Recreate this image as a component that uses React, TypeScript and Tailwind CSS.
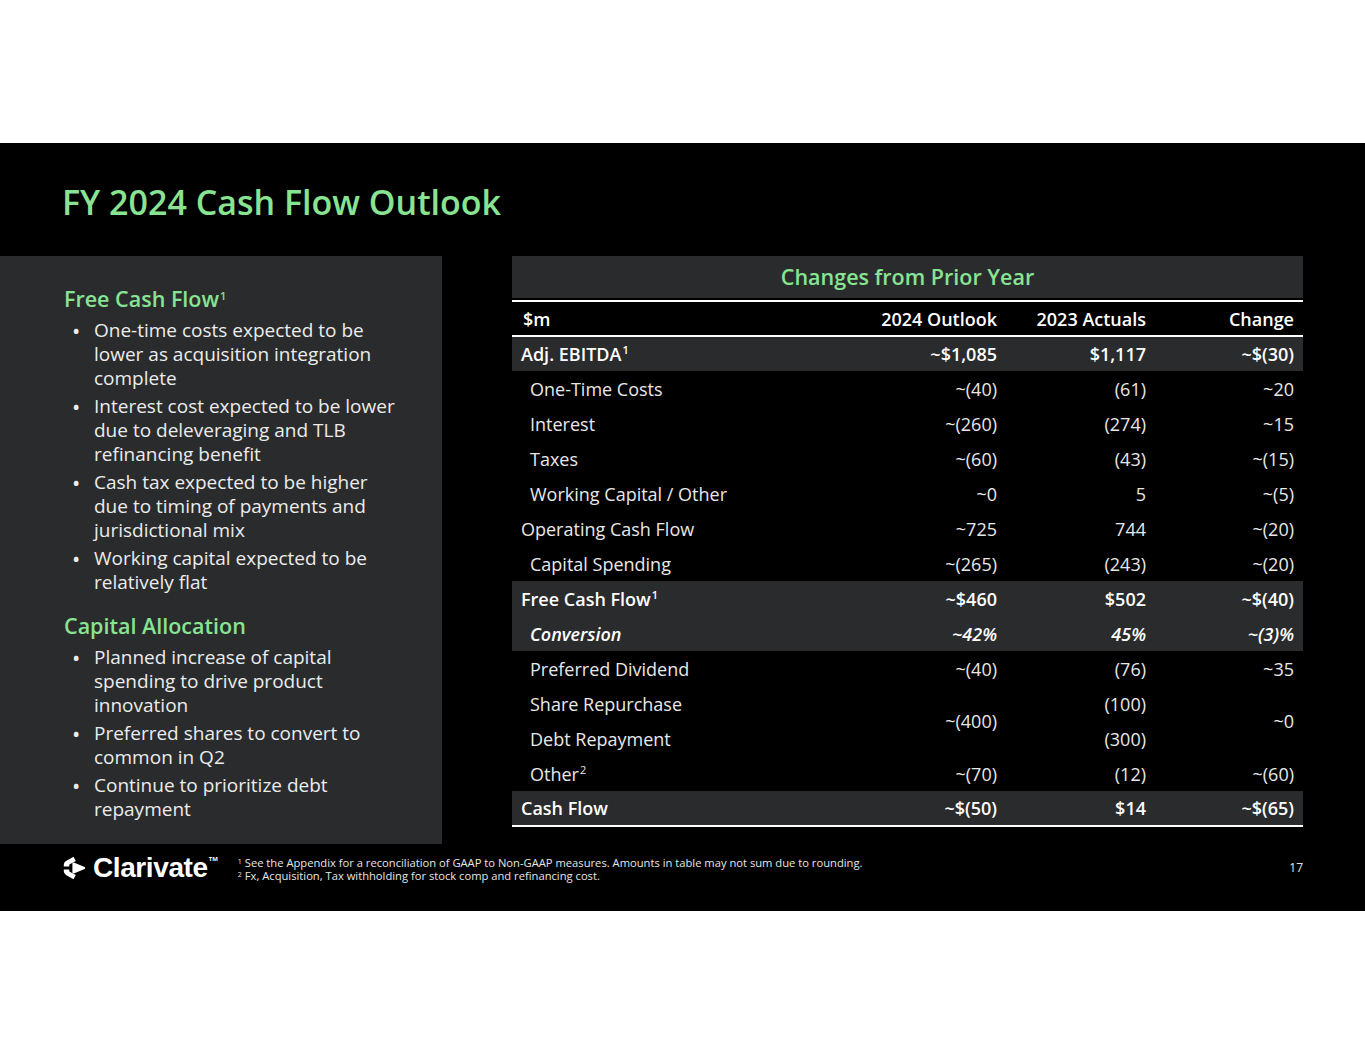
import React from 'react'

type Row = {
  label: React.ReactNode
  outlook?: string
  actuals: string
  change?: string
  kind: 'total' | 'plain' | 'italic'
  indent?: boolean
  span?: boolean
  skip?: boolean
}

function Sup({ n }: { n: string }) {
  return <span className="relative -top-[7px] ml-[1px] text-[11px] leading-none">{n}</span>
}

const rows: Row[] = [
  { label: <>Adj. EBITDA<Sup n="1" /></>, outlook: '~$1,085', actuals: '$1,117', change: '~$(30)', kind: 'total' },
  { label: 'One-Time Costs', outlook: '~(40)', actuals: '(61)', change: '~20', kind: 'plain', indent: true },
  { label: 'Interest', outlook: '~(260)', actuals: '(274)', change: '~15', kind: 'plain', indent: true },
  { label: 'Taxes', outlook: '~(60)', actuals: '(43)', change: '~(15)', kind: 'plain', indent: true },
  { label: 'Working Capital / Other', outlook: '~0', actuals: '5', change: '~(5)', kind: 'plain', indent: true },
  { label: 'Operating Cash Flow', outlook: '~725', actuals: '744', change: '~(20)', kind: 'plain' },
  { label: 'Capital Spending', outlook: '~(265)', actuals: '(243)', change: '~(20)', kind: 'plain', indent: true },
  { label: <>Free Cash Flow<Sup n="1" /></>, outlook: '~$460', actuals: '$502', change: '~$(40)', kind: 'total' },
  { label: 'Conversion', outlook: '~42%', actuals: '45%', change: '~(3)%', kind: 'italic', indent: true },
  { label: 'Preferred Dividend', outlook: '~(40)', actuals: '(76)', change: '~35', kind: 'plain', indent: true },
  { label: 'Share Repurchase', outlook: '~(400)', actuals: '(100)', change: '~0', kind: 'plain', indent: true, span: true },
  { label: 'Debt Repayment', actuals: '(300)', kind: 'plain', indent: true, skip: true },
  { label: <>Other<Sup n="2" /></>, outlook: '~(70)', actuals: '(12)', change: '~(60)', kind: 'plain', indent: true },
  { label: 'Cash Flow', outlook: '~$(50)', actuals: '$14', change: '~$(65)', kind: 'total' },
]

const bulletsFcf = [
  ['One-time costs expected to be', 'lower as acquisition integration', 'complete'],
  ['Interest cost expected to be lower', 'due to deleveraging and TLB', 'refinancing benefit'],
  ['Cash tax expected to be higher', 'due to timing of payments and', 'jurisdictional mix'],
  ['Working capital expected to be', 'relatively flat'],
]

const bulletsCap = [
  ['Planned increase of capital', 'spending to drive product', 'innovation'],
  ['Preferred shares to convert to', 'common in Q2'],
  ['Continue to prioritize debt', 'repayment'],
]

function Bullets({ items }: { items: string[][] }) {
  return (
    <ul className="mt-[6px] space-y-[4px]">
      {items.map((lines, i) => (
        <li key={i} className="flex text-[19px] leading-[24px] text-[#ececec]">
          <span className="w-[30px] pl-[8px] text-[22px] leading-[24px]">•</span>
          <span className="whitespace-nowrap">
            {lines.map((l, j) => (
              <span key={j} className="block">{l}</span>
            ))}
          </span>
        </li>
      ))}
    </ul>
  )
}

function Logo() {
  return (
    <div className="flex items-center">
      <svg width="24" height="24" viewBox="0 0 24 24" className="mr-[6px]">
        <path d="M10.5 0.8 L3 5 Q0.8 6.3 0.8 8.8 L0.8 10.5 L6.3 10.5 L6.3 8.6 L12.8 5 Z" fill="#fff" />
        <path d="M0.8 13.5 L0.8 15.2 Q0.8 17.7 3 19 L10.5 23.2 L12.8 19 L6.3 15.4 L6.3 13.5 Z" fill="#fff" />
        <path d="M9.4 7.4 Q9.4 5.9 10.8 6.6 L21.6 11 Q23.2 12 21.6 13 L10.8 17.4 Q9.4 18.1 9.4 16.6 Z" fill="#fff" />
      </svg>
      <span className="text-[28px] font-bold leading-none tracking-[-0.4px] text-white" style={{ fontFamily: '"Liberation Sans", Arial, sans-serif' }}>
        Clarivate
      </span>
      <span className="-mt-[17px] ml-[1px] text-[6px] font-bold text-white">TM</span>
    </div>
  )
}

export default function App() {
  return (
    <div className="min-h-[1055px] w-[1365px] bg-white" style={{ fontFamily: '"Open Sans", "Noto Sans", sans-serif' }}>
      <div className="h-[143px]" />
      <div className="flex h-[768px] flex-col bg-black">
        <div className="h-[113px] pl-[62px] pt-[36px]">
          <h1 className="text-[34px] font-semibold leading-[46px] text-[#88e392]">FY 2024 Cash Flow Outlook</h1>
        </div>

        <div className="flex h-[588px]">
          <div className="w-[442px] bg-[#2a2b2d] pl-[64px] pt-[30px]">
            <h2 className="text-[21.5px] font-semibold leading-[26px] text-[#88e392]">
              Free Cash Flow<Sup n="1" />
            </h2>
            <Bullets items={bulletsFcf} />
            <h2 className="mt-[19px] text-[21.5px] font-semibold leading-[26px] text-[#88e392]">Capital Allocation</h2>
            <Bullets items={bulletsCap} />
          </div>

          <div className="ml-[70px] w-[791px]">
            <div className="flex h-[42px] items-center justify-center bg-[#2a2b2d] text-[21.5px] font-semibold text-[#88e392]">
              Changes from Prior Year
            </div>
            <div className="mt-[2px] h-[2px] bg-white" />
            <table className="w-full table-fixed border-collapse text-[18px] leading-none">
              <colgroup>
                <col className="w-[343px]" />
                <col className="w-[150px]" />
                <col className="w-[150px]" />
                <col className="w-[148px]" />
              </colgroup>
              <thead>
                <tr className="h-[34px] border-b-2 border-white text-white">
                  <th className="pl-[11px] text-left font-semibold">$m</th>
                  <th className="pr-[8px] text-right font-semibold">2024 Outlook</th>
                  <th className="pr-[9px] text-right font-semibold">2023 Actuals</th>
                  <th className="pr-[9px] text-right font-semibold">Change</th>
                </tr>
              </thead>
              <tbody>
                {rows.map((r, i) => {
                  const gray = r.kind !== 'plain'
                  const weight = r.kind === 'plain' ? 'font-normal text-[#e8e8e8]' : 'font-semibold text-white'
                  const italic = r.kind === 'italic' ? 'italic' : ''
                  const last = i === rows.length - 1
                  return (
                    <tr
                      key={i}
                      className={`h-[35px] ${gray ? 'bg-[#2a2b2d]' : ''} ${weight} ${italic} ${last ? 'border-b-2 border-white' : ''}`}
                    >
                      <td className={`${r.indent ? 'pl-[18px]' : 'pl-[9px]'} whitespace-nowrap`}>{r.label}</td>
                      {!r.skip && (
                        <td rowSpan={r.span ? 2 : 1} className="whitespace-nowrap pr-[8px] text-right align-middle">
                          {r.outlook}
                        </td>
                      )}
                      <td className="whitespace-nowrap pr-[9px] text-right">{r.actuals}</td>
                      {!r.skip && (
                        <td rowSpan={r.span ? 2 : 1} className="whitespace-nowrap pr-[9px] text-right align-middle">
                          {r.change}
                        </td>
                      )}
                    </tr>
                  )
                })}
              </tbody>
            </table>
          </div>
        </div>

        <div className="flex h-[67px] items-start pl-[63px] pt-[10px]">
          <Logo />
          <div className="ml-[20px] pt-[2px] text-[11.2px] leading-[13px] text-[#e6e6e6]">
            <div><span className="relative -top-[3px] text-[7px] leading-none">1</span> See the Appendix for a reconciliation of GAAP to Non-GAAP measures. Amounts in table may not sum due to rounding.</div>
            <div><span className="relative -top-[3px] text-[7px] leading-none">2</span> Fx, Acquisition, Tax withholding for stock comp and refinancing cost.</div>
          </div>
          <div className="ml-auto mr-[62px] pt-[5px] text-[12px] text-[#e6e6e6]">17</div>
        </div>
      </div>
    </div>
  )
}
